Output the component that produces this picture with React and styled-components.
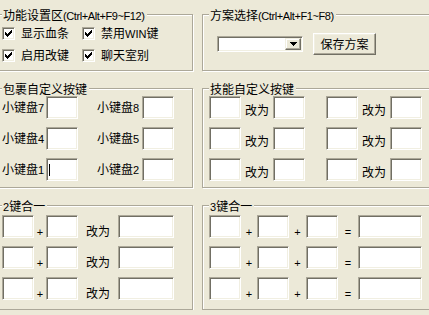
import React from 'react';
import styled, { createGlobalStyle } from 'styled-components';

const GlobalStyle = createGlobalStyle`
  html, body { margin: 0; padding: 0; background: #ECE9D8; overflow: hidden; }
  body {
    font-family: "Noto Sans CJK SC", "Liberation Sans", sans-serif;
    font-size: 12px;
    color: #000;
  }
`;

const Page = styled.div`
  display: grid;
  grid-template-columns: 198px 240px;
  column-gap: 9px;
  row-gap: 17px;
  margin-left: -5px;
  padding-top: 14px;
  width: max-content;
`;

const Group = styled.section`
  box-sizing: border-box;
  border: 1px solid #ACA899;
  box-shadow: inset 1px 1px 0 #fff, 1px 1px 0 #fff;
  padding: 0 6px ${p => p.$pb ?? 0}px 6px;
  min-width: 0;
`;

const Legend = styled.div`
  width: max-content;
  height: 13px;
  line-height: 13px;
  margin-top: -7px;
  padding: 0 2px 0 1px;
  background: #ECE9D8;
  white-space: nowrap;
`;

const Latin = styled.span`
  font-family: "Liberation Sans", Arial, sans-serif;
  font-size: 11px;
  letter-spacing: ${p => (p.$tight ? '-0.4px' : '0')};
`;

function Txt({ children, tight }) {
  return String(children)
    .split(/([\x20-\x7E]+)/)
    .filter(Boolean)
    .map((s, i) =>
      /^[\x20-\x7E]+$/.test(s) ? (
        <Latin key={i} $tight={tight}>{s}</Latin>
      ) : (
        <React.Fragment key={i}>{s}</React.Fragment>
      )
    );
}

const CheckGrid = styled.div`
  display: grid;
  grid-template-columns: 80px auto;
  row-gap: 6px;
  margin-top: 4px;
`;

const CheckItem = styled.label`
  display: flex;
  align-items: center;
  gap: 6px;
  height: 16px;
  line-height: 16px;
  white-space: nowrap;
`;

const CheckBox = styled.span`
  box-sizing: border-box;
  flex: none;
  width: 13px;
  height: 13px;
  background: #fff;
  border: 1px solid;
  border-color: #ACA899 #fff #fff #ACA899;
  box-shadow: inset 1px 1px 0 #716F64, inset -1px -1px 0 #F1EFE2;
  display: flex;
  align-items: center;
  justify-content: center;
`;

const CheckMark = () => (
  <svg width="7" height="7" viewBox="0 0 7 7" shapeRendering="crispEdges">
    <path
      fill="#000"
      d="M6 0h1v1h-1z M5 1h2v1h-2z M0 2h1v1h-1z M4 2h3v1h-3z M0 3h2v1h-2z M3 3h3v1h-3z M0 4h5v1h-5z M1 5h3v1h-3z M2 6h1v1h-1z"
    />
  </svg>
);

const SchemeRow = styled.div`
  display: flex;
  align-items: center;
  gap: 10px;
  margin: 12px 0 0 8px;
`;

const Combo = styled.div`
  box-sizing: border-box;
  width: 86px;
  height: 16px;
  padding: 1px;
  background: #fff;
  border: 1px solid;
  border-color: #ACA899 #fff #fff #ACA899;
  box-shadow: inset 1px 1px 0 #716F64, inset -1px -1px 0 #F1EFE2;
  display: flex;
  justify-content: flex-end;
`;

const DropButton = styled.span`
  box-sizing: border-box;
  width: 16px;
  height: 100%;
  background: #ECE9D8;
  border: 1px solid;
  border-color: #F1EFE2 #716F64 #716F64 #F1EFE2;
  box-shadow: inset -1px -1px 0 #ACA899, inset 1px 1px 0 #fff;
  display: flex;
  align-items: center;
  justify-content: center;
`;

const Arrow = () => (
  <svg width="7" height="4" viewBox="0 0 7 4" shapeRendering="crispEdges">
    <path fill="#000" d="M0 0h7v1h-7z M1 1h5v1h-5z M2 2h3v1h-3z M3 3h1v1h-1z" />
  </svg>
);

const Button = styled.button`
  box-sizing: border-box;
  width: 63px;
  height: 22px;
  padding: 0;
  font: inherit;
  color: #000;
  background: #ECE9D8;
  border: 1px solid;
  border-color: #fff #716F64 #716F64 #fff;
  box-shadow: inset -1px -1px 0 #ACA899, inset 1px 1px 0 #F1EFE2;
  display: flex;
  align-items: center;
  justify-content: center;
  line-height: 14px;
`;

const FieldGrid = styled.div`
  display: grid;
  grid-template-columns: ${p => p.$cols};
  grid-auto-rows: 23px;
  row-gap: 8px;
  margin-top: ${p => p.$mt}px;
`;

const Edit = styled.div`
  box-sizing: border-box;
  height: 23px;
  padding-left: 2px;
  background: #fff;
  border: 1px solid;
  border-color: #ACA899 #fff #fff #ACA899;
  box-shadow: inset 1px 1px 0 #716F64, inset -1px -1px 0 #F1EFE2;
  display: flex;
  align-items: center;
`;

const Caret = styled.span`
  width: 1px;
  height: 12px;
  background: #000;
`;

const Label = styled.span`
  line-height: 14px;
  white-space: nowrap;
  text-align: ${p => p.$align || 'left'};
  align-self: ${p => (p.$drop != null ? 'start' : 'center')};
  padding-top: ${p => p.$drop || 0}px;
`;

const Skip = styled.span``;

const checks = ['显示血条', '禁用WIN键', '启用改键', '聊天室别'];
const numpad = [
  ['小键盘7', '小键盘8'],
  ['小键盘4', '小键盘5'],
  ['小键盘1', '小键盘2'],
];
const rows3 = [0, 1, 2];

export default function App() {
  return (
    <>
      <GlobalStyle />
      <Page>
        <Group $pb={7}>
          <Legend>
            <Txt>功能设置区</Txt>
            <Txt tight>(Ctrl+Alt+F9~F12)</Txt>
          </Legend>
          <CheckGrid>
            {checks.map(c => (
              <CheckItem key={c}>
                <CheckBox>
                  <CheckMark />
                </CheckBox>
                <span>
                  <Txt>{c}</Txt>
                </span>
              </CheckItem>
            ))}
          </CheckGrid>
        </Group>

        <Group>
          <Legend>
            <Txt>方案选择</Txt>
            <Txt tight>(Ctrl+Alt+F1~F8)</Txt>
          </Legend>
          <SchemeRow>
            <Combo>
              <DropButton>
                <Arrow />
              </DropButton>
            </Combo>
            <Button>保存方案</Button>
          </SchemeRow>
        </Group>

        <Group $pb={6}>
          <Legend>包裹自定义按键</Legend>
          <FieldGrid $cols="44px 32px 19px 45px 32px" $mt={1}>
            {numpad.map(([a, b], r) => (
              <React.Fragment key={a}>
                <Label>
                  <Txt>{a}</Txt>
                </Label>
                <Edit>{r === 2 && <Caret />}</Edit>
                <Skip />
                <Label>
                  <Txt>{b}</Txt>
                </Label>
                <Edit />
              </React.Fragment>
            ))}
          </FieldGrid>
        </Group>

        <Group $pb={6}>
          <Legend>技能自定义按键</Legend>
          <FieldGrid $cols="32px 32px 32px 21px 32px 32px 32px" $mt={1}>
            {rows3.map(r => (
              <React.Fragment key={r}>
                <Edit />
                <Label $align="center" $drop={7}>改为</Label>
                <Edit />
                <Skip />
                <Edit />
                <Label $align="center" $drop={7}>改为</Label>
                <Edit />
              </React.Fragment>
            ))}
          </FieldGrid>
        </Group>

        <Group $pb={9}>
          <Legend>
            <Txt>2键合一</Txt>
          </Legend>
          <FieldGrid $cols="32px 12px 32px 40px 56px" $mt={3}>
            {rows3.map(r => (
              <React.Fragment key={r}>
                <Edit />
                <Label $align="center" $drop={9}>
                  <Txt>+</Txt>
                </Label>
                <Edit />
                <Label $align="center" $drop={9}>改为</Label>
                <Edit />
              </React.Fragment>
            ))}
          </FieldGrid>
        </Group>

        <Group $pb={9}>
          <Legend>
            <Txt>3键合一</Txt>
          </Legend>
          <FieldGrid $cols="32px 16px 32px 17px 32px 20px 64px" $mt={3}>
            {rows3.map(r => (
              <React.Fragment key={r}>
                <Edit />
                <Label $align="center" $drop={9}>
                  <Txt>+</Txt>
                </Label>
                <Edit />
                <Label $align="center" $drop={9}>
                  <Txt>+</Txt>
                </Label>
                <Edit />
                <Label $align="center" $drop={9}>
                  <Txt>=</Txt>
                </Label>
                <Edit />
              </React.Fragment>
            ))}
          </FieldGrid>
        </Group>
      </Page>
    </>
  );
}
